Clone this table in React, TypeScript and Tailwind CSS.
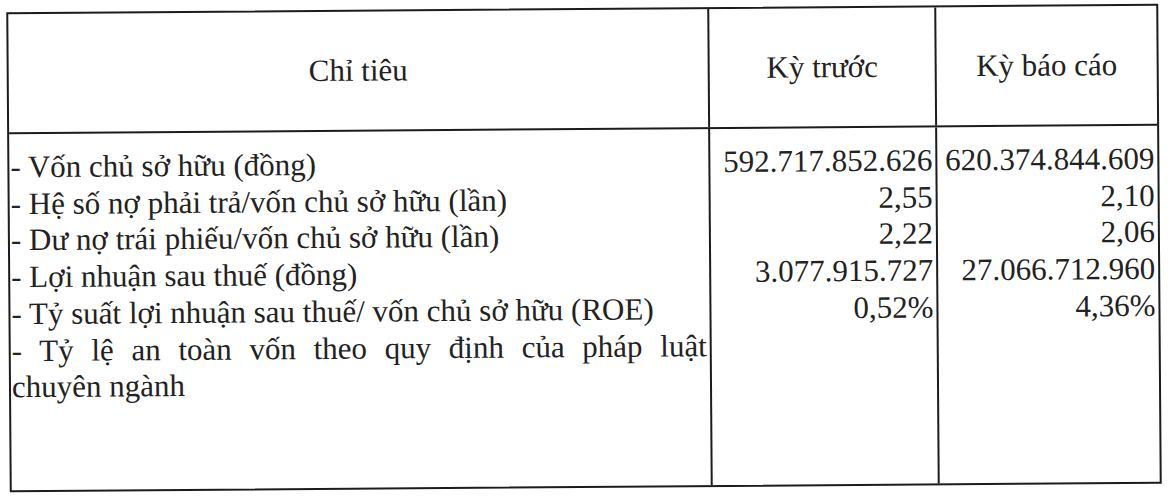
const rows = [
  { label: "- Vốn chủ sở hữu (đồng)", prev: "592.717.852.626", cur: "620.374.844.609" },
  { label: "- Hệ số nợ phải trả/vốn chủ sở hữu (lần)", prev: "2,55", cur: "2,10" },
  { label: "- Dư nợ trái phiếu/vốn chủ sở hữu (lần)", prev: "2,22", cur: "2,06" },
  { label: "- Lợi nhuận sau thuế (đồng)", prev: "3.077.915.727", cur: "27.066.712.960" },
  { label: "- Tỷ suất lợi nhuận sau thuế/ vốn chủ sở hữu (ROE)", prev: "0,52%", cur: "4,36%" },
]

export default function App() {
  return (
    <div className="min-h-screen bg-white p-2">
      {/* scanned table, slightly tilted like the source page */}
      <div className="w-[1152px] h-[480px] -rotate-[0.42deg] border-2 border-[#1c1c1c] flex flex-col font-['Liberation_Serif',serif] text-[31px] text-[#222222]">
        {/* Header */}
        <div className="flex h-[120px] border-b-2 border-[#1c1c1c] shrink-0">
          <div className="w-[699px] flex items-center justify-center">Chỉ tiêu</div>
          <div className="w-[227px] border-l-2 border-[#1c1c1c] flex items-center justify-center">Kỳ trước</div>
          <div className="flex-1 border-l-2 border-[#1c1c1c] flex items-center justify-center">Kỳ báo cáo</div>
        </div>

        {/* Body */}
        <div className="flex flex-1 leading-[36.7px]">
          <div className="w-[699px] pt-[15px] pl-[1px] pr-[3px]">
            {rows.map((r) => (
              <div key={r.label} className="whitespace-nowrap">{r.label}</div>
            ))}
            <div className="text-justify [text-align-last:justify]">- Tỷ lệ an toàn vốn theo quy định của pháp luật</div>
            <div>chuyên ngành</div>
          </div>
          <div className="w-[227px] border-l-2 border-[#1c1c1c] pt-[15px] pr-[3px] text-right">
            {rows.map((r) => (
              <div key={r.label}>{r.prev}</div>
            ))}
          </div>
          <div className="flex-1 border-l-2 border-[#1c1c1c] pt-[15px] pr-[3px] text-right">
            {rows.map((r) => (
              <div key={r.label}>{r.cur}</div>
            ))}
          </div>
        </div>
      </div>
    </div>
  )
}
